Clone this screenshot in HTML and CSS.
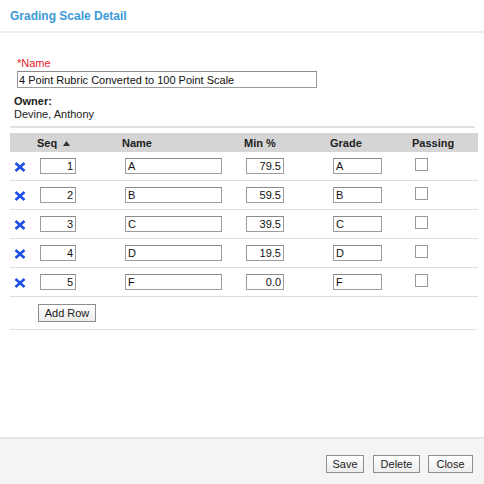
FILE: index.html
```html
<!DOCTYPE html>
<html>
<head>
<meta charset="utf-8">
<link rel="stylesheet" href="styles.css">
</head>
<body>
<div class="page">
  <div class="header"><span class="title">Grading Scale Detail</span></div>
  <div class="content">
    <div class="field">
      <div class="req">*Name</div>
      <input class="name-input" type="text" value="4 Point Rubric Converted to 100 Point Scale">
    </div>
    <div class="owner">
      <div class="owner-label">Owner:</div>
      <div class="owner-name">Devine, Anthony</div>
    </div>
    <div class="table">
      <div class="row head">
        <div></div>
        <div class="hc">Seq <svg class="sort" width="7" height="5" viewBox="0 0 7 5"><polygon points="3.5,0 7,5 0,5" fill="#333"/></svg></div>
        <div class="hc">Name</div>
        <div class="hc">Min %</div>
        <div class="hc">Grade</div>
        <div class="hc">Passing</div>
      </div>
      <div class="row">
        <div class="del"><svg width="12" height="10" viewBox="0 0 12 10"><path d="M1.5 1 L10.5 9 M10.5 1 L1.5 9" stroke="#1d4fe6" stroke-width="2.6" stroke-linecap="butt"/></svg></div>
        <div><input class="seq" type="text" value="1"></div>
        <div><input class="nm" type="text" value="A"></div>
        <div><input class="min" type="text" value="79.5"></div>
        <div><input class="grade" type="text" value="A"></div>
        <div><input class="chk" type="checkbox"></div>
      </div>
      <div class="row">
        <div class="del"><svg width="12" height="10" viewBox="0 0 12 10"><path d="M1.5 1 L10.5 9 M10.5 1 L1.5 9" stroke="#1d4fe6" stroke-width="2.6" stroke-linecap="butt"/></svg></div>
        <div><input class="seq" type="text" value="2"></div>
        <div><input class="nm" type="text" value="B"></div>
        <div><input class="min" type="text" value="59.5"></div>
        <div><input class="grade" type="text" value="B"></div>
        <div><input class="chk" type="checkbox"></div>
      </div>
      <div class="row">
        <div class="del"><svg width="12" height="10" viewBox="0 0 12 10"><path d="M1.5 1 L10.5 9 M10.5 1 L1.5 9" stroke="#1d4fe6" stroke-width="2.6" stroke-linecap="butt"/></svg></div>
        <div><input class="seq" type="text" value="3"></div>
        <div><input class="nm" type="text" value="C"></div>
        <div><input class="min" type="text" value="39.5"></div>
        <div><input class="grade" type="text" value="C"></div>
        <div><input class="chk" type="checkbox"></div>
      </div>
      <div class="row">
        <div class="del"><svg width="12" height="10" viewBox="0 0 12 10"><path d="M1.5 1 L10.5 9 M10.5 1 L1.5 9" stroke="#1d4fe6" stroke-width="2.6" stroke-linecap="butt"/></svg></div>
        <div><input class="seq" type="text" value="4"></div>
        <div><input class="nm" type="text" value="D"></div>
        <div><input class="min" type="text" value="19.5"></div>
        <div><input class="grade" type="text" value="D"></div>
        <div><input class="chk" type="checkbox"></div>
      </div>
      <div class="row">
        <div class="del"><svg width="12" height="10" viewBox="0 0 12 10"><path d="M1.5 1 L10.5 9 M10.5 1 L1.5 9" stroke="#1d4fe6" stroke-width="2.6" stroke-linecap="butt"/></svg></div>
        <div><input class="seq" type="text" value="5"></div>
        <div><input class="nm" type="text" value="F"></div>
        <div><input class="min" type="text" value="0.0"></div>
        <div><input class="grade" type="text" value="F"></div>
        <div><input class="chk" type="checkbox"></div>
      </div>
      <div class="addrow"><button class="btn add">Add Row</button></div>
    </div>
  </div>
  <div class="footer">
    <button class="btn save">Save</button>
    <button class="btn delete">Delete</button>
    <button class="btn close">Close</button>
  </div>
</div>
</body>
</html>
```
FILE: styles.css
```css
html, body {
  margin: 0;
  padding: 0;
  background: #fff;
}
body {
  font-family: "Liberation Sans", Arial, sans-serif;
  font-size: 11px;
  color: #222;
}
.page {
  width: 484px;
  height: 484px;
  display: flex;
  flex-direction: column;
  overflow: hidden;
}
.header {
  height: 33px;
  border-bottom: 2px solid #eeeeee;
  box-sizing: border-box;
  padding: 9px 0 0 10px;
}
.title {
  font-weight: bold;
  font-size: 12px;
  color: #3b9ad9;
}
.content {
  flex: 1;
  padding: 0 6px 0 10px;
}
.field {
  padding: 24px 0 0 7px;
}
.req {
  color: #e8202a;
  line-height: 13px;
}
.name-input {
  display: block;
  margin: 1px 0 0 0;
  width: 300px;
  height: 17px;
  box-sizing: border-box;
  border: 1px solid #9c9c9c;
  border-top-color: #8a8a8a;
  padding: 0 1px;
  font-family: "Liberation Sans", Arial, sans-serif;
  font-size: 11px;
  color: #111;
  outline: none;
}
.owner {
  padding: 7px 0 5px 4px;
  border-bottom: 2px solid #e2e2e2;
  width: 465px;
  margin-left: 0;
  line-height: 13px;
  box-sizing: border-box;
}
.owner-label {
  font-weight: bold;
}
.owner-name {
  color: #222;
}
.table {
  margin-top: 5px;
  width: 468px;
}
.row {
  display: grid;
  grid-template-columns: 26px 85px 122px 86px 82px 1fr;
  align-items: center;
  height: 29px;
  box-sizing: border-box;
  border-bottom: 1px solid #dddddd;
}
.row.head {
  height: 19px;
  background: #d5d5d5;
  border-bottom: none;
  font-weight: bold;
  color: #222;
}
.hc {
  padding-left: 1px;
  display: flex;
  align-items: center;
}
.sort {
  margin-left: 6px;
  margin-top: 1px;
}
.del {
  display: flex;
  align-items: center;
  padding-left: 4px;
  padding-top: 1px;
}
.row input[type="text"] {
  height: 16px;
  box-sizing: border-box;
  border: 1px solid #9c9c9c;
  border-top-color: #8a8a8a;
  padding: 0 2px;
  font-family: "Liberation Sans", Arial, sans-serif;
  font-size: 11px;
  color: #111;
  outline: none;
  margin: 0;
  display: block;
}
.seq {
  width: 36px;
  margin-left: 4px !important;
  text-align: right;
}
.nm {
  width: 97px;
  margin-left: 4px !important;
}
.min {
  width: 38px;
  margin-left: 3px !important;
  text-align: right;
}
.grade {
  width: 49px;
  margin-left: 4px !important;
}
.chk {
  appearance: none;
  -webkit-appearance: none;
  width: 13px;
  height: 13px;
  margin: 0 0 3px 4px;
  border: 1px solid #9a9a9a;
  background: #fff;
  display: block;
  box-sizing: border-box;
}
.addrow {
  height: 33px;
  box-sizing: border-box;
  border-bottom: 1px solid #e2e2e2;
  padding: 7px 0 0 28px;
  width: 467px;
}
.btn {
  height: 18px;
  box-sizing: border-box;
  border: 1px solid #8e8e8e;
  background: linear-gradient(#ffffff, #ececec);
  font-family: "Liberation Sans", Arial, sans-serif;
  font-size: 11px;
  color: #222;
  padding: 0;
  margin: 0;
  line-height: 15px;
}
.add {
  width: 58px;
}
.footer {
  height: 47px;
  box-sizing: border-box;
  border-top: 2px solid #e5e5e5;
  background: #f4f4f4;
  display: flex;
  justify-content: flex-end;
  align-items: flex-start;
  padding: 16px 11px 0 0;
}
.save {
  width: 38px;
}
.delete {
  width: 47px;
  margin-left: 9px;
}
.close {
  width: 45px;
  margin-left: 8px;
}
```
